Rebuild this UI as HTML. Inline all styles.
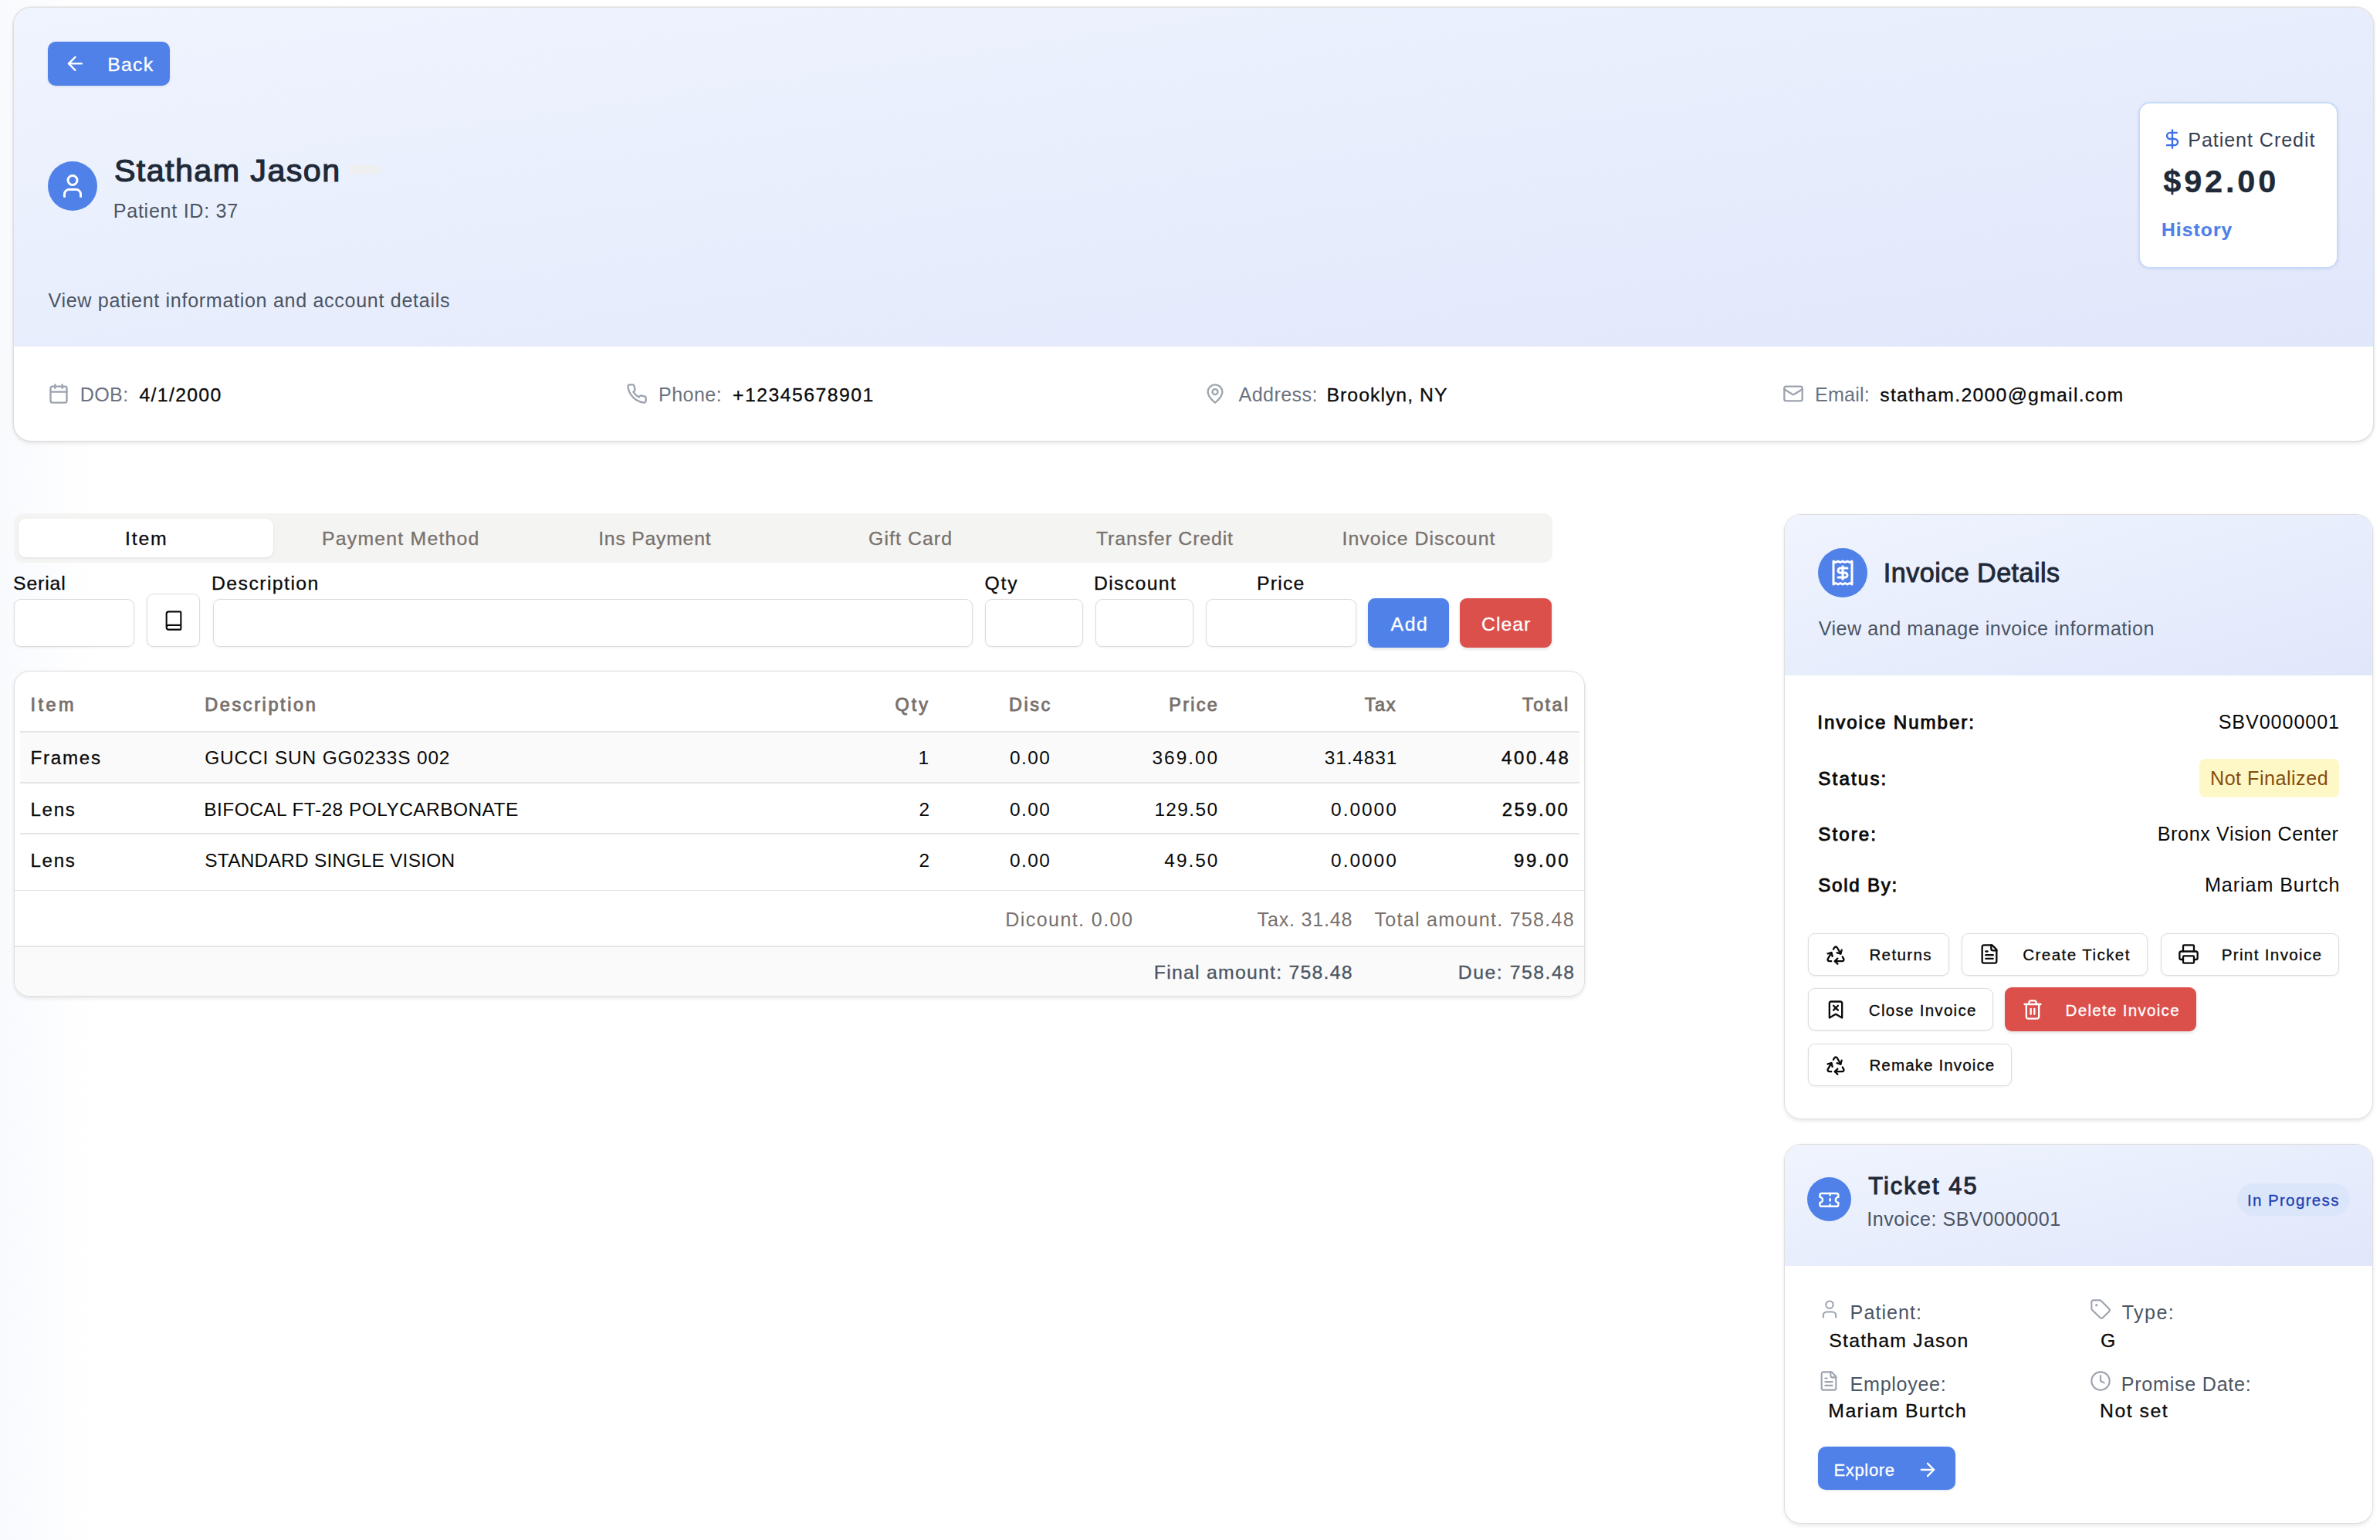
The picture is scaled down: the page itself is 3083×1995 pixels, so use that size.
<!DOCTYPE html>
<html lang="en">
<head>
<meta charset="utf-8">
<title>Patient Invoice</title>
<style>
html,body{margin:0;padding:0;}
body{width:3083px;height:1995px;overflow:hidden;position:relative;font-family:"Liberation Sans",sans-serif;
 background:linear-gradient(90deg,#f8fafe 0px,#fbfcfe 50px,#ffffff 120px);}
.t{position:absolute;white-space:nowrap;}
.ic{display:block;}
</style>
</head>
<body>
<div style="position:absolute;left:18px;top:10px;width:3056px;height:561px;border-radius:22px;overflow:hidden;box-shadow:0 0 0 1.5px #e1dfdd,0 0 6px rgba(0,0,0,0.05),0 3px 6px rgba(0,0,0,0.09);background:#fff"><div style="position:absolute;left:0;top:0;width:3056px;height:439px;background:linear-gradient(to bottom right,#eff4fe,#e1e7fb)"></div></div>
<div style="position:absolute;left:62.00px;top:54.00px;width:158.00px;height:57.00px;background:#4f81e9;border-radius:10px;box-shadow:0 1px 3px rgba(0,0,0,0.12)"></div>
<svg class="ic" style="position:absolute;left:82.60px;top:68.10px;width:28.80px;height:28.80px;color:#fff" viewBox="0 0 24 24" fill="none" stroke="currentColor" stroke-width="2" stroke-linecap="round" stroke-linejoin="round"><path d="m12 19-7-7 7-7"/><path d="M19 12H5"/></svg>
<div class="t" style="left:139.25px;top:72px;font-size:24.80px;line-height:24.80px;font-weight:400;color:#fff;letter-spacing:1.250px;-webkit-text-stroke:0.3px #fff;">Back</div>
<div style="position:absolute;left:62.00px;top:209.00px;width:64.00px;height:64.00px;background:#4f81e9;border-radius:50%"></div>
<svg class="ic" style="position:absolute;left:76.00px;top:223.00px;width:36.00px;height:36.00px;color:#fff" viewBox="0 0 24 24" fill="none" stroke="currentColor" stroke-width="2" stroke-linecap="round" stroke-linejoin="round"><path d="M19 21v-2a4 4 0 0 0-4-4H9a4 4 0 0 0-4 4v2"/><circle cx="12" cy="7" r="4"/></svg>
<div class="t" style="left:147.90px;top:201px;font-size:41.26px;line-height:41.26px;font-weight:400;color:#1f2937;letter-spacing:1.425px;-webkit-text-stroke:1.2px #1f2937;">Statham Jason</div>
<div style="position:absolute;left:453.00px;top:214.00px;width:40.00px;height:11.00px;background:#efefef;border-radius:6px"></div>
<div class="t" style="left:146.75px;top:261px;font-size:25.14px;line-height:25.14px;font-weight:400;color:#4b5563;letter-spacing:0.712px;">Patient ID: 37</div>
<div class="t" style="left:62.50px;top:377px;font-size:25.14px;line-height:25.14px;font-weight:400;color:#4b5563;letter-spacing:0.669px;">View patient information and account details</div>
<div style="position:absolute;left:2770.00px;top:132.30px;width:259.00px;height:216.10px;box-sizing:border-box;background:#fff;border:2px solid #c6dbfc;border-radius:15px;box-shadow:0 1px 4px rgba(0,0,0,0.07)"></div>
<svg class="ic" style="position:absolute;left:2800.10px;top:166.20px;width:28.00px;height:28.00px;color:#3f6fe6" viewBox="0 0 24 24" fill="none" stroke="currentColor" stroke-width="2" stroke-linecap="round" stroke-linejoin="round"><line x1="12" x2="12" y1="2" y2="22"/><path d="M17 5H9.5a3.5 3.5 0 0 0 0 7h5a3.5 3.5 0 0 1 0 7H6"/></svg>
<div class="t" style="left:2834.20px;top:169px;font-size:25.14px;line-height:25.14px;font-weight:400;color:#374151;letter-spacing:0.931px;">Patient Credit</div>
<div class="t" style="left:2802.30px;top:214px;font-size:41.45px;line-height:41.45px;font-weight:700;color:#1f2937;letter-spacing:3.840px;-webkit-text-stroke:0.4px #1f2937;">$92.00</div>
<div class="t" style="left:2800.00px;top:286px;font-size:24.50px;line-height:24.50px;font-weight:700;color:#4f7fe8;letter-spacing:1.133px;-webkit-text-stroke:0.2px #4f7fe8;">History</div>
<svg class="ic" style="position:absolute;left:62.10px;top:496.00px;width:28.00px;height:28.00px;color:#9ca3af" viewBox="0 0 24 24" fill="none" stroke="currentColor" stroke-width="2" stroke-linecap="round" stroke-linejoin="round"><path d="M8 2v4"/><path d="M16 2v4"/><rect width="18" height="18" x="3" y="4" rx="2"/><path d="M3 10h18"/></svg>
<div class="t" style="left:103.75px;top:499px;font-size:25.14px;line-height:25.14px;font-weight:400;color:#6b7280;letter-spacing:0.333px;">DOB:</div>
<div class="t" style="left:180.50px;top:500px;font-size:24.80px;line-height:24.80px;font-weight:400;color:#0a0a0a;letter-spacing:1.321px;-webkit-text-stroke:0.3px #0a0a0a;">4/1/2000</div>
<svg class="ic" style="position:absolute;left:811.25px;top:496.25px;width:28.00px;height:28.00px;color:#9ca3af" viewBox="0 0 24 24" fill="none" stroke="currentColor" stroke-width="2" stroke-linecap="round" stroke-linejoin="round"><path d="M22 16.92v3a2 2 0 0 1-2.18 2 19.79 19.79 0 0 1-8.63-3.07 19.5 19.5 0 0 1-6-6 19.79 19.79 0 0 1-3.07-8.67A2 2 0 0 1 4.11 2h3a2 2 0 0 1 2 1.72 12.84 12.84 0 0 0 .7 2.81 2 2 0 0 1-.45 2.11L8.09 9.91a16 16 0 0 0 6 6l1.27-1.27a2 2 0 0 1 2.11-.45 12.84 12.84 0 0 0 2.81.7A2 2 0 0 1 22 16.92z"/></svg>
<div class="t" style="left:853.00px;top:499px;font-size:25.14px;line-height:25.14px;font-weight:400;color:#6b7280;letter-spacing:0.400px;">Phone:</div>
<div class="t" style="left:949.00px;top:500px;font-size:24.80px;line-height:24.80px;font-weight:400;color:#0a0a0a;letter-spacing:1.455px;-webkit-text-stroke:0.3px #0a0a0a;">+12345678901</div>
<svg class="ic" style="position:absolute;left:1560.40px;top:496.00px;width:28.00px;height:28.00px;color:#9ca3af" viewBox="0 0 24 24" fill="none" stroke="currentColor" stroke-width="2" stroke-linecap="round" stroke-linejoin="round"><path d="M20 10c0 6-8 12-8 12s-8-6-8-12a8 8 0 0 1 16 0Z"/><circle cx="12" cy="10" r="3"/></svg>
<div class="t" style="left:1604.50px;top:499px;font-size:25.14px;line-height:25.14px;font-weight:400;color:#6b7280;letter-spacing:0.393px;">Address:</div>
<div class="t" style="left:1718.50px;top:500px;font-size:24.80px;line-height:24.80px;font-weight:400;color:#0a0a0a;letter-spacing:1.023px;-webkit-text-stroke:0.3px #0a0a0a;">Brooklyn, NY</div>
<svg class="ic" style="position:absolute;left:2309.10px;top:495.75px;width:28.00px;height:28.00px;color:#9ca3af" viewBox="0 0 24 24" fill="none" stroke="currentColor" stroke-width="2" stroke-linecap="round" stroke-linejoin="round"><rect width="20" height="16" x="2" y="4" rx="2"/><path d="m22 7-8.97 5.7a1.94 1.94 0 0 1-2.06 0L2 7"/></svg>
<div class="t" style="left:2351.00px;top:499px;font-size:25.14px;line-height:25.14px;font-weight:400;color:#6b7280;letter-spacing:0.200px;">Email:</div>
<div class="t" style="left:2435.25px;top:500px;font-size:24.80px;line-height:24.80px;font-weight:400;color:#0a0a0a;letter-spacing:1.262px;-webkit-text-stroke:0.3px #0a0a0a;">statham.2000@gmail.com</div>
<div style="position:absolute;left:18.00px;top:664.50px;width:1992.50px;height:64.20px;background:#f4f4f3;border-radius:12px"></div>
<div style="position:absolute;left:24.25px;top:672.00px;width:329.75px;height:50.00px;background:#fff;border-radius:9px;box-shadow:0 1px 3px rgba(0,0,0,0.10)"></div>
<div class="t" style="left:162.00px;top:686px;font-size:24.80px;line-height:24.80px;font-weight:400;color:#0a0a0a;letter-spacing:1.833px;-webkit-text-stroke:0.3px #0a0a0a;">Item</div>
<div class="t" style="left:417.10px;top:686px;font-size:24.80px;line-height:24.80px;font-weight:400;color:#78716c;letter-spacing:1.215px;-webkit-text-stroke:0.3px #78716c;">Payment Method</div>
<div class="t" style="left:775.20px;top:686px;font-size:24.80px;line-height:24.80px;font-weight:400;color:#78716c;letter-spacing:0.760px;-webkit-text-stroke:0.3px #78716c;">Ins Payment</div>
<div class="t" style="left:1125.00px;top:686px;font-size:24.80px;line-height:24.80px;font-weight:400;color:#78716c;letter-spacing:1.100px;-webkit-text-stroke:0.3px #78716c;">Gift Card</div>
<div class="t" style="left:1420.00px;top:686px;font-size:24.80px;line-height:24.80px;font-weight:400;color:#78716c;letter-spacing:0.893px;-webkit-text-stroke:0.3px #78716c;">Transfer Credit</div>
<div class="t" style="left:1738.50px;top:686px;font-size:24.80px;line-height:24.80px;font-weight:400;color:#78716c;letter-spacing:1.067px;-webkit-text-stroke:0.3px #78716c;">Invoice Discount</div>
<div class="t" style="left:17.00px;top:744px;font-size:24.80px;line-height:24.80px;font-weight:400;color:#0a0a0a;letter-spacing:0.850px;-webkit-text-stroke:0.3px #0a0a0a;">Serial</div>
<div class="t" style="left:274.00px;top:744px;font-size:24.80px;line-height:24.80px;font-weight:400;color:#0a0a0a;letter-spacing:1.430px;-webkit-text-stroke:0.3px #0a0a0a;">Description</div>
<div class="t" style="left:1275.40px;top:744px;font-size:24.80px;line-height:24.80px;font-weight:400;color:#0a0a0a;letter-spacing:1.800px;-webkit-text-stroke:0.3px #0a0a0a;">Qty</div>
<div class="t" style="left:1416.90px;top:744px;font-size:24.80px;line-height:24.80px;font-weight:400;color:#0a0a0a;letter-spacing:1.357px;-webkit-text-stroke:0.3px #0a0a0a;">Discount</div>
<div class="t" style="left:1628.00px;top:744px;font-size:24.80px;line-height:24.80px;font-weight:400;color:#0a0a0a;letter-spacing:1.200px;-webkit-text-stroke:0.3px #0a0a0a;">Price</div>
<div style="position:absolute;left:18.00px;top:775.75px;width:156.00px;height:62.25px;box-sizing:border-box;background:#fff;border:1.5px solid #dedcdb;border-radius:9px;box-shadow:0 1px 3px rgba(0,0,0,0.07)"></div>
<div style="position:absolute;left:189.75px;top:769.00px;width:69.25px;height:68.60px;box-sizing:border-box;background:#fff;border:1.5px solid #dedcdb;border-radius:9px;box-shadow:0 1px 3px rgba(0,0,0,0.07)"></div>
<svg class="ic" style="position:absolute;left:211.25px;top:790.00px;width:28.00px;height:28.00px;color:#0a0a0a" viewBox="0 0 24 24" fill="none" stroke="currentColor" stroke-width="1.8" stroke-linecap="round" stroke-linejoin="round"><path d="M4 19.5v-15A2.5 2.5 0 0 1 6.5 2H19a1 1 0 0 1 1 1v18a1 1 0 0 1-1 1H6.5a1 1 0 0 1 0-5H20"/></svg>
<div style="position:absolute;left:276.00px;top:775.75px;width:984.00px;height:62.25px;box-sizing:border-box;background:#fff;border:1.5px solid #dedcdb;border-radius:9px;box-shadow:0 1px 3px rgba(0,0,0,0.07)"></div>
<div style="position:absolute;left:1276.40px;top:775.75px;width:126.60px;height:62.25px;box-sizing:border-box;background:#fff;border:1.5px solid #dedcdb;border-radius:9px;box-shadow:0 1px 3px rgba(0,0,0,0.07)"></div>
<div style="position:absolute;left:1418.90px;top:775.75px;width:127.10px;height:62.25px;box-sizing:border-box;background:#fff;border:1.5px solid #dedcdb;border-radius:9px;box-shadow:0 1px 3px rgba(0,0,0,0.07)"></div>
<div style="position:absolute;left:1561.80px;top:775.75px;width:194.90px;height:62.25px;box-sizing:border-box;background:#fff;border:1.5px solid #dedcdb;border-radius:9px;box-shadow:0 1px 3px rgba(0,0,0,0.07)"></div>
<div style="position:absolute;left:1771.80px;top:774.70px;width:105.20px;height:63.90px;background:#4f81e9;border-radius:9px;box-shadow:0 2px 4px rgba(0,0,0,0.12)"></div>
<div class="t" style="left:1801.40px;top:797px;font-size:24.80px;line-height:24.80px;font-weight:400;color:#fff;letter-spacing:1.700px;-webkit-text-stroke:0.3px #fff;">Add</div>
<div style="position:absolute;left:1891.20px;top:774.70px;width:119.30px;height:63.90px;background:#dc504b;border-radius:9px;box-shadow:0 2px 4px rgba(0,0,0,0.12)"></div>
<div class="t" style="left:1919.00px;top:797px;font-size:24.80px;line-height:24.80px;font-weight:400;color:#fff;letter-spacing:1.000px;-webkit-text-stroke:0.3px #fff;">Clear</div>
<div style="position:absolute;left:18px;top:868.8px;width:2035.4px;height:422.5px;box-sizing:border-box;border-radius:20px;overflow:hidden;border:1.5px solid #e0dfde;box-shadow:0 0 5px rgba(0,0,0,0.04),0 3px 5px rgba(0,0,0,0.07);background:#fff"><div style="position:absolute;left:6.5px;top:77.7px;width:2020px;height:1.5px;background:#e7e5e4"></div><div style="position:absolute;left:6.5px;top:79.2px;width:2020px;height:65px;background:#fafafa"></div><div style="position:absolute;left:6.5px;top:143.5px;width:2020px;height:1.5px;background:#e7e5e4"></div><div style="position:absolute;left:6.5px;top:209.7px;width:2020px;height:1.5px;background:#e7e5e4"></div><div style="position:absolute;left:0;top:283.1px;width:2040px;height:1.5px;background:#e7e5e4"></div><div style="position:absolute;left:0;top:355.4px;width:2040px;height:1.5px;background:#e7e5e4"></div><div style="position:absolute;left:0;top:356.9px;width:2040px;height:70px;background:#fafafa"></div></div>
<div class="t" style="left:39.50px;top:902px;font-size:23.44px;line-height:23.44px;font-weight:400;color:#78716c;letter-spacing:3.500px;-webkit-text-stroke:0.9px #78716c;">Item</div>
<div class="t" style="left:265.25px;top:902px;font-size:23.44px;line-height:23.44px;font-weight:400;color:#78716c;letter-spacing:2.625px;-webkit-text-stroke:0.9px #78716c;">Description</div>
<div class="t" style="left:1159.50px;top:902px;font-size:23.44px;line-height:23.44px;font-weight:400;color:#78716c;letter-spacing:3.050px;-webkit-text-stroke:0.9px #78716c;">Qty</div>
<div class="t" style="left:1307.00px;top:902px;font-size:23.44px;line-height:23.44px;font-weight:400;color:#78716c;letter-spacing:2.567px;-webkit-text-stroke:0.9px #78716c;">Disc</div>
<div class="t" style="left:1514.20px;top:902px;font-size:23.44px;line-height:23.44px;font-weight:400;color:#78716c;letter-spacing:2.325px;-webkit-text-stroke:0.9px #78716c;">Price</div>
<div class="t" style="left:1767.70px;top:902px;font-size:23.44px;line-height:23.44px;font-weight:400;color:#78716c;letter-spacing:1.650px;-webkit-text-stroke:0.9px #78716c;">Tax</div>
<div class="t" style="left:1972.00px;top:902px;font-size:23.44px;line-height:23.44px;font-weight:400;color:#78716c;letter-spacing:2.425px;-webkit-text-stroke:0.9px #78716c;">Total</div>
<div class="t" style="left:39.50px;top:970px;font-size:24.11px;line-height:24.11px;font-weight:400;color:#0a0a0a;letter-spacing:1.750px;-webkit-text-stroke:0.3px #0a0a0a;">Frames</div>
<div class="t" style="left:265.25px;top:970px;font-size:24.44px;line-height:24.44px;font-weight:400;color:#0a0a0a;letter-spacing:0.850px;">GUCCI SUN GG0233S 002</div>
<div class="t" style="left:1189.60px;top:970px;font-size:24.44px;line-height:24.44px;font-weight:400;color:#0a0a0a;">1</div>
<div class="t" style="left:1308.00px;top:970px;font-size:24.44px;line-height:24.44px;font-weight:400;color:#0a0a0a;letter-spacing:1.467px;">0.00</div>
<div class="t" style="left:1492.60px;top:970px;font-size:24.44px;line-height:24.44px;font-weight:400;color:#0a0a0a;letter-spacing:1.940px;">369.00</div>
<div class="t" style="left:1715.70px;top:970px;font-size:24.44px;line-height:24.44px;font-weight:400;color:#0a0a0a;letter-spacing:0.883px;">31.4831</div>
<div class="t" style="left:1945.00px;top:970px;font-size:23.94px;line-height:23.94px;font-weight:400;color:#0a0a0a;letter-spacing:2.740px;-webkit-text-stroke:0.45px #0a0a0a;">400.48</div>
<div class="t" style="left:39.50px;top:1037px;font-size:24.11px;line-height:24.11px;font-weight:400;color:#0a0a0a;letter-spacing:1.667px;-webkit-text-stroke:0.3px #0a0a0a;">Lens</div>
<div class="t" style="left:264.25px;top:1037px;font-size:24.44px;line-height:24.44px;font-weight:400;color:#0a0a0a;letter-spacing:0.471px;">BIFOCAL FT-28 POLYCARBONATE</div>
<div class="t" style="left:1190.60px;top:1037px;font-size:24.44px;line-height:24.44px;font-weight:400;color:#0a0a0a;">2</div>
<div class="t" style="left:1308.00px;top:1037px;font-size:24.44px;line-height:24.44px;font-weight:400;color:#0a0a0a;letter-spacing:1.467px;">0.00</div>
<div class="t" style="left:1495.40px;top:1037px;font-size:24.44px;line-height:24.44px;font-weight:400;color:#0a0a0a;letter-spacing:1.380px;">129.50</div>
<div class="t" style="left:1724.10px;top:1037px;font-size:24.44px;line-height:24.44px;font-weight:400;color:#0a0a0a;letter-spacing:1.980px;">0.0000</div>
<div class="t" style="left:1945.80px;top:1037px;font-size:23.94px;line-height:23.94px;font-weight:400;color:#0a0a0a;letter-spacing:2.380px;-webkit-text-stroke:0.45px #0a0a0a;">259.00</div>
<div class="t" style="left:39.50px;top:1103px;font-size:24.11px;line-height:24.11px;font-weight:400;color:#0a0a0a;letter-spacing:1.667px;-webkit-text-stroke:0.3px #0a0a0a;">Lens</div>
<div class="t" style="left:265.25px;top:1103px;font-size:24.44px;line-height:24.44px;font-weight:400;color:#0a0a0a;letter-spacing:0.250px;">STANDARD SINGLE VISION</div>
<div class="t" style="left:1190.60px;top:1103px;font-size:24.44px;line-height:24.44px;font-weight:400;color:#0a0a0a;">2</div>
<div class="t" style="left:1308.00px;top:1103px;font-size:24.44px;line-height:24.44px;font-weight:400;color:#0a0a0a;letter-spacing:1.467px;">0.00</div>
<div class="t" style="left:1508.30px;top:1103px;font-size:24.44px;line-height:24.44px;font-weight:400;color:#0a0a0a;letter-spacing:2.000px;">49.50</div>
<div class="t" style="left:1724.10px;top:1103px;font-size:24.44px;line-height:24.44px;font-weight:400;color:#0a0a0a;letter-spacing:1.980px;">0.0000</div>
<div class="t" style="left:1960.90px;top:1103px;font-size:23.94px;line-height:23.94px;font-weight:400;color:#0a0a0a;letter-spacing:2.700px;-webkit-text-stroke:0.45px #0a0a0a;">99.00</div>
<div class="t" style="left:1302.20px;top:1179px;font-size:25.14px;line-height:25.14px;font-weight:400;color:#78716c;letter-spacing:1.392px;">Dicount. 0.00</div>
<div class="t" style="left:1628.60px;top:1179px;font-size:25.14px;line-height:25.14px;font-weight:400;color:#78716c;letter-spacing:0.778px;">Tax. 31.48</div>
<div class="t" style="left:1780.50px;top:1179px;font-size:25.14px;line-height:25.14px;font-weight:400;color:#78716c;letter-spacing:1.237px;">Total amount. 758.48</div>
<div class="t" style="left:1494.80px;top:1248px;font-size:24.80px;line-height:24.80px;font-weight:400;color:#4b5563;letter-spacing:1.253px;-webkit-text-stroke:0.3px #4b5563;">Final amount: 758.48</div>
<div class="t" style="left:1888.80px;top:1248px;font-size:24.80px;line-height:24.80px;font-weight:400;color:#4b5563;letter-spacing:1.520px;-webkit-text-stroke:0.3px #4b5563;">Due: 758.48</div>
<div style="position:absolute;left:2311px;top:665.7px;width:762.5px;height:784.6px;box-sizing:border-box;border-radius:22px;overflow:hidden;border:1.5px solid #e0dfde;box-shadow:0 0 5px rgba(0,0,0,0.04),0 3px 5px rgba(0,0,0,0.07);background:#fff"><div style="position:absolute;left:0;top:0;width:762.5px;height:208.3px;background:linear-gradient(to bottom right,#eff4fe,#e1e7fb)"></div></div>
<div style="position:absolute;left:2355.00px;top:710.00px;width:64.00px;height:64.00px;background:#4f81e9;border-radius:50%"></div>
<svg class="ic" style="position:absolute;left:2368.70px;top:723.90px;width:36.00px;height:36.00px;color:#fff" viewBox="0 0 24 24" fill="none" stroke="currentColor" stroke-width="2" stroke-linecap="round" stroke-linejoin="round"><path d="M4 2v20l2-1 2 1 2-1 2 1 2-1 2 1 2-1 2 1V2l-2 1-2-1-2 1-2-1-2 1-2-1-2 1Z"/><path d="M16 8h-6a2 2 0 1 0 0 4h4a2 2 0 1 1 0 4H8"/><path d="M12 17.5v-11"/></svg>
<div class="t" style="left:2439.80px;top:725px;font-size:34.19px;line-height:34.19px;font-weight:400;color:#1f2937;letter-spacing:0.436px;-webkit-text-stroke:0.9px #1f2937;">Invoice Details</div>
<div class="t" style="left:2355.70px;top:802px;font-size:25.14px;line-height:25.14px;font-weight:400;color:#4b5563;letter-spacing:0.518px;">View and manage invoice information</div>
<div class="t" style="left:2354.30px;top:924px;font-size:24.13px;line-height:24.13px;font-weight:400;color:#0a0a0a;letter-spacing:1.929px;-webkit-text-stroke:0.9px #0a0a0a;">Invoice Number:</div>
<div class="t" style="left:2355.30px;top:997px;font-size:24.13px;line-height:24.13px;font-weight:400;color:#0a0a0a;letter-spacing:2.150px;-webkit-text-stroke:0.9px #0a0a0a;">Status:</div>
<div class="t" style="left:2355.30px;top:1069px;font-size:24.13px;line-height:24.13px;font-weight:400;color:#0a0a0a;letter-spacing:2.060px;-webkit-text-stroke:0.9px #0a0a0a;">Store:</div>
<div class="t" style="left:2355.30px;top:1135px;font-size:24.13px;line-height:24.13px;font-weight:400;color:#0a0a0a;letter-spacing:1.729px;-webkit-text-stroke:0.9px #0a0a0a;">Sold By:</div>
<div class="t" style="left:2873.70px;top:923px;font-size:25.14px;line-height:25.14px;font-weight:400;color:#0a0a0a;letter-spacing:0.922px;">SBV0000001</div>
<div style="position:absolute;left:2849.30px;top:983.30px;width:180.70px;height:49.40px;background:#fdf8c6;border-radius:8px"></div>
<div class="t" style="left:2863.00px;top:996px;font-size:25.14px;line-height:25.14px;font-weight:400;color:#854d0e;letter-spacing:0.500px;">Not Finalized</div>
<div class="t" style="left:2794.70px;top:1068px;font-size:25.14px;line-height:25.14px;font-weight:400;color:#0a0a0a;letter-spacing:0.628px;">Bronx Vision Center</div>
<div class="t" style="left:2856.00px;top:1134px;font-size:25.14px;line-height:25.14px;font-weight:400;color:#0a0a0a;letter-spacing:0.917px;">Mariam Burtch</div>
<div style="position:absolute;left:2342.20px;top:1208.80px;width:182.90px;height:54.90px;box-sizing:border-box;background:#fff;border:1.5px solid #dedcdb;border-radius:9px;box-shadow:0 1px 3px rgba(0,0,0,0.07)"></div>
<div style="position:absolute;left:2540.90px;top:1208.80px;width:241.30px;height:54.90px;box-sizing:border-box;background:#fff;border:1.5px solid #dedcdb;border-radius:9px;box-shadow:0 1px 3px rgba(0,0,0,0.07)"></div>
<div style="position:absolute;left:2798.90px;top:1208.80px;width:231.10px;height:54.90px;box-sizing:border-box;background:#fff;border:1.5px solid #dedcdb;border-radius:9px;box-shadow:0 1px 3px rgba(0,0,0,0.07)"></div>
<div style="position:absolute;left:2342.20px;top:1280.00px;width:240.20px;height:54.80px;box-sizing:border-box;background:#fff;border:1.5px solid #dedcdb;border-radius:9px;box-shadow:0 1px 3px rgba(0,0,0,0.07)"></div>
<div style="position:absolute;left:2596.90px;top:1279.00px;width:247.80px;height:56.80px;background:#dc504b;border-radius:9px;box-shadow:0 2px 4px rgba(0,0,0,0.12)"></div>
<div style="position:absolute;left:2342.00px;top:1351.60px;width:263.80px;height:55.00px;box-sizing:border-box;background:#fff;border:1.5px solid #dedcdb;border-radius:9px;box-shadow:0 1px 3px rgba(0,0,0,0.07)"></div>
<svg class="ic" style="position:absolute;left:2364.20px;top:1222.50px;width:28.00px;height:28.00px;color:#0a0a0a" viewBox="0 0 24 24" fill="none" stroke="currentColor" stroke-width="2" stroke-linecap="round" stroke-linejoin="round"><path d="M7 19H4.815a1.83 1.83 0 0 1-1.57-.881 1.785 1.785 0 0 1-.004-1.784L7.196 9.5"/><path d="M11 19h8.203a1.83 1.83 0 0 0 1.556-.89 1.784 1.784 0 0 0 0-1.775l-1.226-2.12"/><path d="m14 16-3 3 3 3"/><path d="M8.293 13.596 7.196 9.5 3.1 10.598"/><path d="m9.344 5.811 1.093-1.892A1.83 1.83 0 0 1 11.985 3a1.784 1.784 0 0 1 1.546.888l3.943 6.843"/><path d="m13.378 9.633 4.096 1.098 1.097-4.096"/></svg>
<svg class="ic" style="position:absolute;left:2563.00px;top:1222.20px;width:28.00px;height:28.00px;color:#0a0a0a" viewBox="0 0 24 24" fill="none" stroke="currentColor" stroke-width="2" stroke-linecap="round" stroke-linejoin="round"><path d="M15 2H6a2 2 0 0 0-2 2v16a2 2 0 0 0 2 2h12a2 2 0 0 0 2-2V7Z"/><path d="M14 2v4a2 2 0 0 0 2 2h4"/><path d="M10 9H8"/><path d="M16 13H8"/><path d="M16 17H8"/></svg>
<svg class="ic" style="position:absolute;left:2820.90px;top:1222.00px;width:28.00px;height:28.00px;color:#0a0a0a" viewBox="0 0 24 24" fill="none" stroke="currentColor" stroke-width="2" stroke-linecap="round" stroke-linejoin="round"><path d="M6 18H4a2 2 0 0 1-2-2v-5a2 2 0 0 1 2-2h16a2 2 0 0 1 2 2v5a2 2 0 0 1-2 2h-2"/><path d="M6 9V3a1 1 0 0 1 1-1h10a1 1 0 0 1 1 1v6"/><rect x="6" y="14" width="12" height="8" rx="1"/></svg>
<svg class="ic" style="position:absolute;left:2364.40px;top:1294.30px;width:28.00px;height:28.00px;color:#0a0a0a" viewBox="0 0 24 24" fill="none" stroke="currentColor" stroke-width="2" stroke-linecap="round" stroke-linejoin="round"><path d="m19 21-7-4-7 4V5a2 2 0 0 1 2-2h10a2 2 0 0 1 2 2Z"/><path d="m14.5 7.5-5 5"/><path d="m9.5 7.5 5 5"/></svg>
<svg class="ic" style="position:absolute;left:2619.40px;top:1294.30px;width:28.00px;height:28.00px;color:#fff" viewBox="0 0 24 24" fill="none" stroke="currentColor" stroke-width="2" stroke-linecap="round" stroke-linejoin="round"><path d="M3 6h18"/><path d="M19 6v14c0 1-1 2-2 2H7c-1 0-2-1-2-2V6"/><path d="M8 6V4c0-1 1-2 2-2h4c1 0 2 1 2 2v2"/><line x1="10" x2="10" y1="11" y2="17"/><line x1="14" x2="14" y1="11" y2="17"/></svg>
<svg class="ic" style="position:absolute;left:2364.10px;top:1365.70px;width:28.00px;height:28.00px;color:#0a0a0a" viewBox="0 0 24 24" fill="none" stroke="currentColor" stroke-width="2" stroke-linecap="round" stroke-linejoin="round"><path d="M7 19H4.815a1.83 1.83 0 0 1-1.57-.881 1.785 1.785 0 0 1-.004-1.784L7.196 9.5"/><path d="M11 19h8.203a1.83 1.83 0 0 0 1.556-.89 1.784 1.784 0 0 0 0-1.775l-1.226-2.12"/><path d="m14 16-3 3 3 3"/><path d="M8.293 13.596 7.196 9.5 3.1 10.598"/><path d="m9.344 5.811 1.093-1.892A1.83 1.83 0 0 1 11.985 3a1.784 1.784 0 0 1 1.546.888l3.943 6.843"/><path d="m13.378 9.633 4.096 1.098 1.097-4.096"/></svg>
<div class="t" style="left:2421.40px;top:1227px;font-size:20.61px;line-height:20.61px;font-weight:400;color:#0a0a0a;letter-spacing:1.333px;-webkit-text-stroke:0.3px #0a0a0a;">Returns</div>
<div class="t" style="left:2620.30px;top:1227px;font-size:20.61px;line-height:20.61px;font-weight:400;color:#0a0a0a;letter-spacing:1.392px;-webkit-text-stroke:0.3px #0a0a0a;">Create Ticket</div>
<div class="t" style="left:2877.70px;top:1227px;font-size:20.61px;line-height:20.61px;font-weight:400;color:#0a0a0a;letter-spacing:1.333px;-webkit-text-stroke:0.3px #0a0a0a;">Print Invoice</div>
<div class="t" style="left:2420.80px;top:1299px;font-size:20.61px;line-height:20.61px;font-weight:400;color:#0a0a0a;letter-spacing:1.242px;-webkit-text-stroke:0.3px #0a0a0a;">Close Invoice</div>
<div class="t" style="left:2675.50px;top:1299px;font-size:20.61px;line-height:20.61px;font-weight:400;color:#fff;letter-spacing:1.269px;-webkit-text-stroke:0.3px #fff;">Delete Invoice</div>
<div class="t" style="left:2421.40px;top:1370px;font-size:20.61px;line-height:20.61px;font-weight:400;color:#0a0a0a;letter-spacing:1.085px;-webkit-text-stroke:0.3px #0a0a0a;">Remake Invoice</div>
<div style="position:absolute;left:2311px;top:1482px;width:762.5px;height:492px;box-sizing:border-box;border-radius:22px;overflow:hidden;border:1.5px solid #e0dfde;box-shadow:0 0 5px rgba(0,0,0,0.04),0 3px 5px rgba(0,0,0,0.07);background:#fff"><div style="position:absolute;left:0;top:0;width:762.5px;height:156.5px;background:linear-gradient(to bottom right,#eff4fe,#e1e7fb)"></div></div>
<div style="position:absolute;left:2341.00px;top:1525.00px;width:57.00px;height:57.00px;background:#4f81e9;border-radius:50%"></div>
<svg class="ic" style="position:absolute;left:2354.80px;top:1539.60px;width:28.80px;height:28.80px;color:#fff" viewBox="0 0 24 24" fill="none" stroke="currentColor" stroke-width="2" stroke-linecap="round" stroke-linejoin="round"><path d="M2 9a3 3 0 0 1 0 6v2a2 2 0 0 0 2 2h16a2 2 0 0 0 2-2v-2a3 3 0 0 1 0-6V7a2 2 0 0 0-2-2H4a2 2 0 0 0-2 2Z"/><path d="M13 5v2"/><path d="M13 17v2"/><path d="M13 11v2"/></svg>
<div class="t" style="left:2420.20px;top:1522px;font-size:30.75px;line-height:30.75px;font-weight:400;color:#1f2937;letter-spacing:2.100px;-webkit-text-stroke:1.1px #1f2937;">Ticket 45</div>
<div class="t" style="left:2418.20px;top:1567px;font-size:25.14px;line-height:25.14px;font-weight:400;color:#4b5563;letter-spacing:0.528px;">Invoice: SBV0000001</div>
<div style="position:absolute;left:2898.00px;top:1533.30px;width:145.80px;height:41.60px;background:#dce6fb;border-radius:21px"></div>
<div class="t" style="left:2911.10px;top:1545px;font-size:20.61px;line-height:20.61px;font-weight:400;color:#1e40af;letter-spacing:1.300px;-webkit-text-stroke:0.3px #1e40af;">In Progress</div>
<svg class="ic" style="position:absolute;left:2355.50px;top:1682.20px;width:28.00px;height:28.00px;color:#9ca3af" viewBox="0 0 24 24" fill="none" stroke="currentColor" stroke-width="1.8" stroke-linecap="round" stroke-linejoin="round"><path d="M19 21v-2a4 4 0 0 0-4-4H9a4 4 0 0 0-4 4v2"/><circle cx="12" cy="7" r="4"/></svg>
<svg class="ic" style="position:absolute;left:2707.20px;top:1681.90px;width:28.00px;height:28.00px;color:#9ca3af" viewBox="0 0 24 24" fill="none" stroke="currentColor" stroke-width="1.8" stroke-linecap="round" stroke-linejoin="round"><path d="M12.586 2.586A2 2 0 0 0 11.172 2H4a2 2 0 0 0-2 2v7.172a2 2 0 0 0 .586 1.414l8.704 8.704a2.426 2.426 0 0 0 3.42 0l6.58-6.58a2.426 2.426 0 0 0 0-3.42z"/><circle cx="7.5" cy="7.5" r=".5" fill="currentColor"/></svg>
<svg class="ic" style="position:absolute;left:2355.30px;top:1775.10px;width:28.00px;height:28.00px;color:#9ca3af" viewBox="0 0 24 24" fill="none" stroke="currentColor" stroke-width="1.8" stroke-linecap="round" stroke-linejoin="round"><path d="M15 2H6a2 2 0 0 0-2 2v16a2 2 0 0 0 2 2h12a2 2 0 0 0 2-2V7Z"/><path d="M14 2v4a2 2 0 0 0 2 2h4"/><path d="M10 9H8"/><path d="M16 13H8"/><path d="M16 17H8"/></svg>
<svg class="ic" style="position:absolute;left:2707.20px;top:1775.10px;width:28.00px;height:28.00px;color:#9ca3af" viewBox="0 0 24 24" fill="none" stroke="currentColor" stroke-width="1.8" stroke-linecap="round" stroke-linejoin="round"><circle cx="12" cy="12" r="10"/><polyline points="12 6 12 12 16 14"/></svg>
<div class="t" style="left:2396.60px;top:1688px;font-size:25.14px;line-height:25.14px;font-weight:400;color:#4b5563;letter-spacing:1.029px;">Patient:</div>
<div class="t" style="left:2369.30px;top:1725px;font-size:24.80px;line-height:24.80px;font-weight:400;color:#0a0a0a;letter-spacing:1.225px;-webkit-text-stroke:0.3px #0a0a0a;">Statham Jason</div>
<div class="t" style="left:2748.70px;top:1688px;font-size:25.14px;line-height:25.14px;font-weight:400;color:#4b5563;letter-spacing:1.400px;">Type:</div>
<div class="t" style="left:2721.00px;top:1725px;font-size:24.80px;line-height:24.80px;font-weight:400;color:#0a0a0a;-webkit-text-stroke:0.3px #0a0a0a;">G</div>
<div class="t" style="left:2396.60px;top:1781px;font-size:25.14px;line-height:25.14px;font-weight:400;color:#4b5563;letter-spacing:0.675px;">Employee:</div>
<div class="t" style="left:2368.30px;top:1816px;font-size:24.80px;line-height:24.80px;font-weight:400;color:#0a0a0a;letter-spacing:1.433px;-webkit-text-stroke:0.3px #0a0a0a;">Mariam Burtch</div>
<div class="t" style="left:2747.70px;top:1781px;font-size:25.14px;line-height:25.14px;font-weight:400;color:#4b5563;letter-spacing:0.742px;">Promise Date:</div>
<div class="t" style="left:2720.00px;top:1816px;font-size:24.80px;line-height:24.80px;font-weight:400;color:#0a0a0a;letter-spacing:1.533px;-webkit-text-stroke:0.3px #0a0a0a;">Not set</div>
<div style="position:absolute;left:2355.20px;top:1874.30px;width:177.80px;height:56.20px;background:#4f81e9;border-radius:10px;box-shadow:0 1px 3px rgba(0,0,0,0.12)"></div>
<div class="t" style="left:2375.40px;top:1894px;font-size:22.01px;line-height:22.01px;font-weight:400;color:#fff;letter-spacing:0.683px;-webkit-text-stroke:0.3px #fff;">Explore</div>
<svg class="ic" style="position:absolute;left:2483.40px;top:1889.70px;width:28.00px;height:28.00px;color:#fff" viewBox="0 0 24 24" fill="none" stroke="currentColor" stroke-width="2" stroke-linecap="round" stroke-linejoin="round"><path d="M5 12h14"/><path d="m12 5 7 7-7 7"/></svg>
</body>
</html>
